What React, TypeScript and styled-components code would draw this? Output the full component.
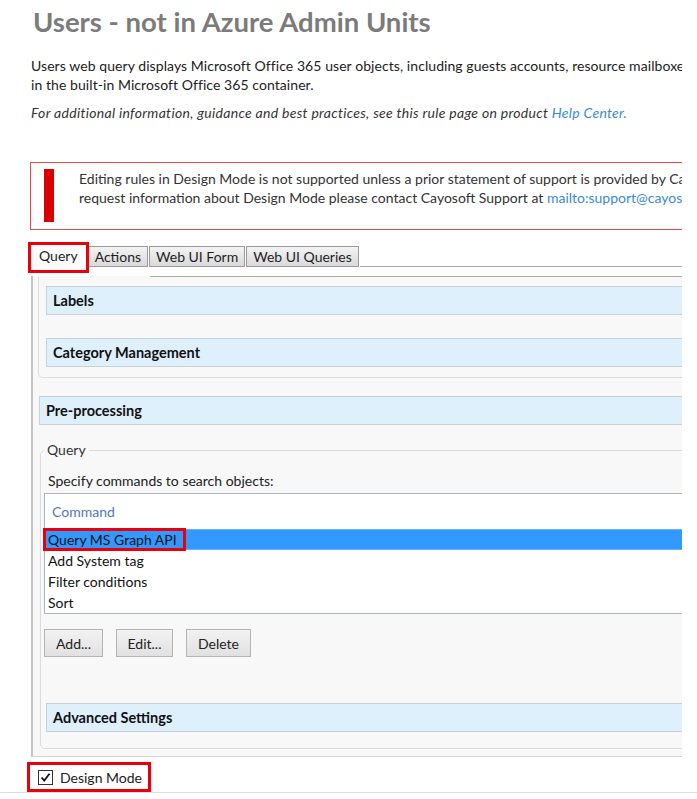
import styled, { createGlobalStyle } from 'styled-components';

const GlobalStyle = createGlobalStyle`
  html, body {
    margin: 0;
    padding: 0;
    background: #fff;
  }
  body {
    font-family: Lato, "Open Sans", sans-serif;
    font-size: 14px;
    color: #222;
  }
`;

const Page = styled.div`
  width: 697px;
  height: 799px;
  overflow: hidden;
`;

const Clip = styled.div`
  width: 682px;
  overflow: hidden;
`;

const Content = styled.div`
  width: 820px;
  padding-left: 30px;
`;

const Title = styled.h1`
  margin: 0 0 0 3px;
  height: 44px;
  line-height: 44px;
  font-size: 27.5px;
  font-weight: 700;
  color: #7b7b7b;
  white-space: nowrap;
`;

const Text = styled.p<{ $italic?: boolean; $top: number }>`
  margin: ${(p) => p.$top}px 0 0 1px;
  line-height: 19px;
  white-space: nowrap;
  color: ${(p) => (p.$italic ? '#333' : '#222')};
  font-style: ${(p) => (p.$italic ? 'italic' : 'normal')};
  letter-spacing: ${(p) => (p.$italic ? '0.3px' : '0.07px')};
`;

const Link = styled.a`
  color: #3a8ad6;
  text-decoration: none;
`;

const Alert = styled.div`
  margin-top: 40px;
  height: 68px;
  box-sizing: border-box;
  border: 1px solid #e64646;
  padding: 6px 13px;
  display: flex;
  align-items: flex-start;
  gap: 25px;
`;

const AlertBar = styled.div`
  width: 10px;
  height: 53px;
  background: #d90000;
  flex-shrink: 0;
`;

const AlertText = styled.div`
  line-height: 19px;
  white-space: nowrap;
  color: #333;
`;

const TabBar = styled.div`
  margin-top: 14px;
  display: flex;
  align-items: flex-end;
  height: 23px;
`;

const Tab = styled.div<{ $active?: boolean }>`
  box-sizing: border-box;
  height: ${(p) => (p.$active ? 27 : 21)}px;
  margin-bottom: ${(p) => (p.$active ? -4 : 0)}px;
  margin-right: 1px;
  padding: 0 ${(p) => (p.$active ? 8 : 6)}px;
  line-height: ${(p) => (p.$active ? 22 : 20)}px;
  border: 1px solid #9a9a9a;
  border-bottom: ${(p) => (p.$active ? 'none' : '1px solid #9a9a9a')};
  background: ${(p) =>
    p.$active ? '#fbfbfb' : 'linear-gradient(#f3f3f3, #dadada)'};
  color: #1e1e1e;
  white-space: nowrap;
  position: relative;
  z-index: ${(p) => (p.$active ? 1 : 0)};
  outline: ${(p) => (p.$active ? '3px solid #e8000b' : 'none')};
  outline-offset: -1px;
`;

const TabFill = styled.div`
  flex: 1;
  border-bottom: 1px solid #a8a8a8;
`;

const Panel = styled.div`
  margin-left: 1px;
  background: #f8f8f8;
  border-left: 2px solid #c4c4c4;
  border-bottom: 1px solid #d4d4d4;
  padding-bottom: 7px;
`;

const TopRule = styled.div`
  margin: 9px 0 0 117px;
  height: 1px;
  background: #a9a9a9;
`;

const GroupBox = styled.div`
  margin-left: 5px;
  border: 1px solid #dcdcdc;
  border-top: none;
  border-radius: 0 0 5px 5px;
  padding: 9px 0 10px 7px;
`;

const Section = styled.div<{ $top?: number; $left?: number }>`
  box-sizing: border-box;
  height: 29px;
  margin: ${(p) => p.$top ?? 0}px 0 0 ${(p) => p.$left ?? 0}px;
  padding-left: 6px;
  line-height: 27px;
  background: #dff0fd;
  border: 1px solid #c8d0d8;
  font-size: 14.5px;
  font-weight: 700;
  color: #111;
`;

const Fieldset = styled.fieldset`
  margin: 16px 0 0 7px;
  padding: 0 0 16px 3px;
  border: 1px solid #dcdcdc;
  border-radius: 5px;
`;

const Legend = styled.legend`
  padding: 0 3px;
  line-height: 18px;
  color: #333;
`;

const Prompt = styled.div`
  margin: 13px 0 0 4px;
  line-height: 18px;
  color: #222;
`;

const List = styled.div`
  margin-top: 3px;
  background: #fff;
  border: 1px solid #aab4c2;
`;

const ListHead = styled.div`
  height: 35px;
  line-height: 35px;
  padding-left: 7px;
  color: #5278bb;
`;

const Row = styled.div<{ $selected?: boolean }>`
  box-sizing: border-box;
  height: 21px;
  padding-left: 3px;
  background: ${(p) => (p.$selected ? '#3399ff' : 'transparent')};
  border-top: 1px solid ${(p) => (p.$selected ? '#66b2ff' : 'transparent')};
  border-bottom: 1px solid ${(p) => (p.$selected ? '#66b2ff' : 'transparent')};
  line-height: 19px;
  color: #111;
`;

const Marked = styled.span`
  display: inline-block;
  margin-left: -3px;
  padding: 0 7px 0 3px;
  outline: 3px solid #e8000b;
  outline-offset: -1px;
`;

const Buttons = styled.div`
  margin-top: 15px;
  display: flex;
  gap: 13px;
`;

const Button = styled.button<{ $w: number }>`
  box-sizing: border-box;
  width: ${(p) => p.$w}px;
  height: 28px;
  padding: 0;
  font: inherit;
  color: #222;
  border: 1px solid #b4b4b4;
  background: linear-gradient(#f2f2f2, #e1e1e1);
`;

const Footer = styled.div`
  height: 36px;
  border-bottom: 1px solid #dcdcdc;
  padding-top: 5px;
  box-sizing: border-box;
`;

const DesignMode = styled.label`
  box-sizing: border-box;
  margin-left: 27px;
  width: 124px;
  height: 30px;
  border: 3px solid #e8000b;
  display: flex;
  align-items: center;
  gap: 7px;
  padding-left: 8px;
  color: #222;
`;

const CheckBox = styled.span`
  width: 13px;
  height: 13px;
  border: 1px solid #333;
  background: #fff;
  display: flex;
  align-items: center;
  justify-content: center;
`;

const commands = ['Query MS Graph API', 'Add System tag', 'Filter conditions', 'Sort'];

export default function App() {
  return (
    <Page>
      <GlobalStyle />
      <Clip>
        <Content>
          <Title>Users - not in Azure Admin Units</Title>
          <Text $top={12}>
            Users web query displays Microsoft Office 365 user objects, including guests accounts, resource
            mailboxes, contacts and groups
            <br />
            in the built-in Microsoft Office 365 container.
          </Text>
          <Text $top={9} $italic>
            For additional information, guidance and best practices, see this rule page on product{' '}
            <Link href="#">Help Center.</Link>
          </Text>

          <Alert>
            <AlertBar />
            <AlertText>
              Editing rules in Design Mode is not supported unless a prior statement of support is provided by
              Cayosoft. To
              <br />
              request information about Design Mode please contact Cayosoft Support at{' '}
              <Link href="#">mailto:support@cayosoft.com</Link>
            </AlertText>
          </Alert>

          <TabBar>
            <Tab $active>Query</Tab>
            <Tab>Actions</Tab>
            <Tab>Web UI Form</Tab>
            <Tab>Web UI Queries</Tab>
            <TabFill />
          </TabBar>

          <Panel>
            <TopRule />
            <GroupBox>
              <Section>Labels</Section>
              <Section $top={23}>Category Management</Section>
            </GroupBox>

            <Section $top={18} $left={6}>
              Pre-processing
            </Section>

            <Fieldset>
              <Legend>Query</Legend>
              <Prompt>Specify commands to search objects:</Prompt>
              <List>
                <ListHead>Command</ListHead>
                {commands.map((c, i) => (
                  <Row key={c} $selected={i === 0}>
                    {i === 0 ? <Marked>{c}</Marked> : c}
                  </Row>
                ))}
              </List>
              <Buttons>
                <Button $w={59}>Add...</Button>
                <Button $w={57}>Edit...</Button>
                <Button $w={65}>Delete</Button>
              </Buttons>
              <Section $top={46} $left={2}>
                Advanced Settings
              </Section>
            </Fieldset>
          </Panel>
        </Content>
      </Clip>

      <Footer>
        <DesignMode>
          <CheckBox>
            <svg width="11" height="11" viewBox="0 0 11 11">
              <path d="M1.5 5.5 L4.2 8.5 L9.5 1.8" fill="none" stroke="#111" strokeWidth="1.8" />
            </svg>
          </CheckBox>
          Design Mode
        </DesignMode>
      </Footer>
    </Page>
  );
}
